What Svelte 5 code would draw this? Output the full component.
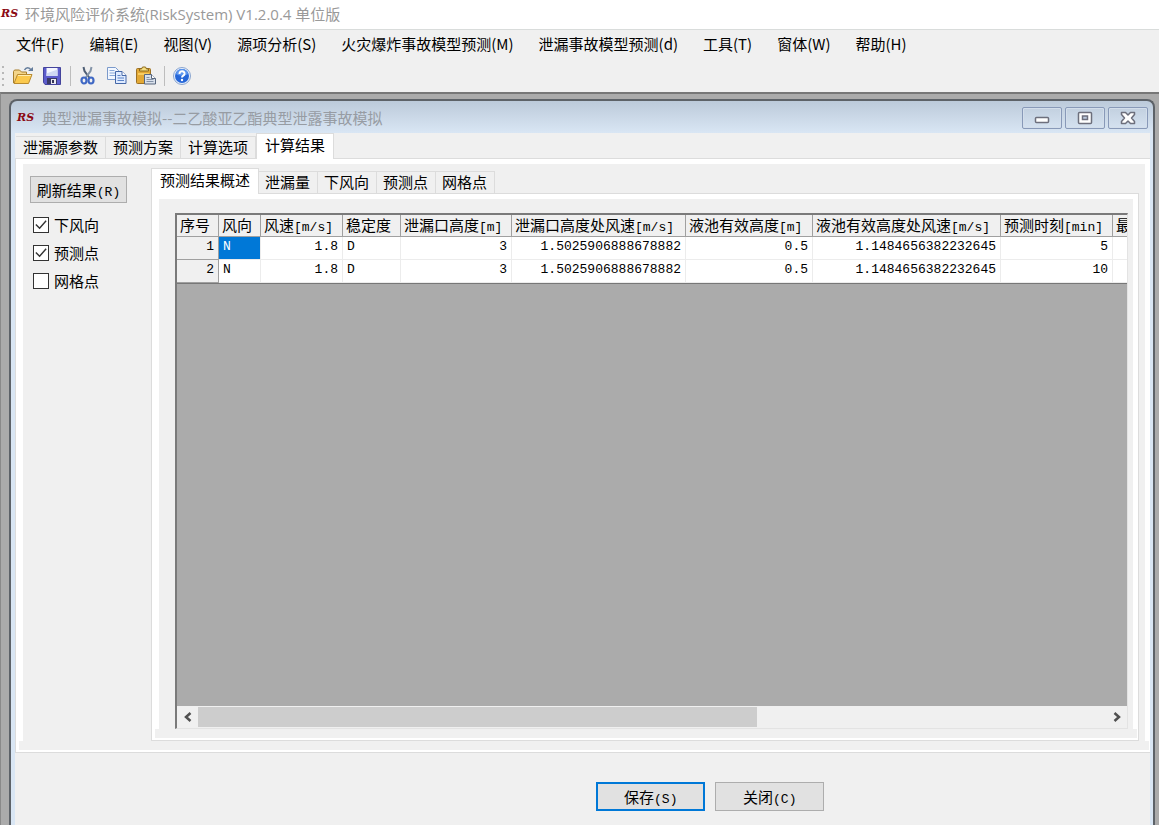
<script>
    const menus = [
        "文件(F)",
        "编辑(E)",
        "视图(V)",
        "源项分析(S)",
        "火灾爆炸事故模型预测(M)",
        "泄漏事故模型预测(d)",
        "工具(T)",
        "窗体(W)",
        "帮助(H)",
    ];

    const tabs = ["泄漏源参数", "预测方案", "计算选项", "计算结果"];
    const resultTabs = ["预测结果概述", "泄漏量", "下风向", "预测点", "网格点"];

    const columns = [
        { name: "序号", unit: "", width: 42 },
        { name: "风向", unit: "", width: 42 },
        { name: "风速", unit: "[m/s]", width: 82, num: true },
        { name: "稳定度", unit: "", width: 58 },
        { name: "泄漏口高度", unit: "[m]", width: 111, num: true },
        { name: "泄漏口高度处风速", unit: "[m/s]", width: 174, num: true },
        { name: "液池有效高度", unit: "[m]", width: 127, num: true },
        { name: "液池有效高度处风速", unit: "[m/s]", width: 188, num: true },
        { name: "预测时刻", unit: "[min]", width: 112, num: true },
        { name: "最", unit: "", width: 120, num: true },
    ];

    const rows = [
        ["1", "N", "1.8", "D", "3", "1.5025906888678882", "0.5", "1.1484656382232645", "5", ""],
        ["2", "N", "1.8", "D", "3", "1.5025906888678882", "0.5", "1.1484656382232645", "10", ""],
    ];

    let activeTab = $state(3);
    let activeResult = $state(0);
    let selected = $state("0-1");
    let options = $state([
        { label: "下风向", checked: true },
        { label: "预测点", checked: true },
        { label: "网格点", checked: false },
    ]);
</script>

<div class="app">
    <header class="titlebar">
        <span class="logo">RS</span>
        <h1>环境风险评价系统(RiskSystem) V1.2.0.4 单位版</h1>
    </header>

    <nav class="menubar">
        {#each menus as menu}
            <button type="button">{menu}</button>
        {/each}
    </nav>

    <div class="toolbar" role="toolbar" aria-label="工具栏">
        <span class="grip"></span>
        <button type="button" class="tool" aria-label="打开">
            <svg width="22" height="20" viewBox="0 0 22 20">
                <path d="M1.500 17V5.500l1-1.500h5l2 2h5v3" fill="#f3d58a" stroke="#a87f2c" />
                <path d="M2 17.500L5.500 8.500h14.500l-3.500 9z" fill="#fbc94d" stroke="#b98a2e" />
                <path d="M6 9.500h13" stroke="#ffedb0" />
                <path d="M12.500 4c1.500-3 5-3 6.500 0" fill="none" stroke="#657d9c" stroke-width="1.500" />
                <path d="M16 5h5V1z" fill="#657d9c" />
            </svg>
        </button>
        <button type="button" class="tool" aria-label="保存">
            <svg width="20" height="20" viewBox="0 0 20 20">
                <path d="M1.500 1.500h17v17H3l-1.500-2z" fill="#5c5ccc" stroke="#44449c" />
                <path d="M4.500 2h11v8h-11z" fill="#f4f6ff" />
                <path d="M4.500 7.500l11-4v6.500h-11z" fill="#cfd8f4" />
                <path d="M5 12h10v6H5z" fill="#3a3a66" />
                <path d="M9 13h5v5H9z" fill="#e8e8f0" />
                <path d="M10 14h2v3h-2z" fill="#333355" />
            </svg>
        </button>
        <span class="sep"></span>
        <button type="button" class="tool" aria-label="剪切">
            <svg width="18" height="20" viewBox="0 0 18 20">
                <path d="M4.500 1l1 4 5 7" fill="none" stroke="#4f5f75" stroke-width="2" />
                <path d="M12.500 1l-1 4-5 7" fill="none" stroke="#8494a8" stroke-width="2" />
                <ellipse cx="5" cy="14.500" rx="2.500" ry="3" fill="none" stroke="#3f68c4" stroke-width="2.200" />
                <ellipse cx="12" cy="14.500" rx="2.500" ry="3" fill="none" stroke="#3f68c4" stroke-width="2.200" />
            </svg>
        </button>
        <button type="button" class="tool" aria-label="复制">
            <svg width="20" height="20" viewBox="0 0 20 20">
                <path d="M.5 1.500h8l3 3v9H.5z" fill="#f2f7ff" stroke="#7b9acb" />
                <path d="M2.500 4.500h5M2.500 7h7M2.500 9.500h7" stroke="#87a7d8" />
                <path d="M8.500 5.500h6.500l4 4v8H8.500z" fill="#dfebff" stroke="#4467a7" />
                <path d="M15 5.500v4h4" fill="#fff" stroke="#4467a7" />
                <path d="M10.500 9.500h3M10.500 12h6.500M10.500 14.500h6.500" stroke="#5b83c6" />
            </svg>
        </button>
        <button type="button" class="tool" aria-label="粘贴">
            <svg width="22" height="20" viewBox="0 0 22 20">
                <rect x="1.500" y="2.500" width="14" height="15" rx="1" fill="#e3a936" stroke="#9c7125" />
                <path d="M4.500 5V3h2l1-2h3l1 2h2v2z" fill="#f6df83" stroke="#8c6a1d" />
                <path d="M3 7h11v2H3z" fill="#f8cd62" />
                <path d="M9.500 8.500h7l4 4v5.500h-11z" fill="#d9e1ec" stroke="#58677f" />
                <path d="M16.500 8.500v4h4" fill="#fff" stroke="#58677f" />
                <path d="M11.500 11.500h3M11.500 13.500h7M11.500 15.500h7" stroke="#8492a8" />
            </svg>
        </button>
        <span class="sep"></span>
        <button type="button" class="tool" aria-label="帮助">
            <svg width="20" height="20" viewBox="0 0 20 20">
                <circle cx="10" cy="10" r="8.500" fill="#e6effc" stroke="#8aa5cf" />
                <circle cx="10" cy="10" r="7" fill="#2566d8" />
                <path d="M4 8a6 5 0 0 1 12 0c-3 2-9 2-12 0z" fill="#5b95ee" />
                <path d="M7.500 8c0-4 5.500-3.500 5 0-.3 1.800-2.500 1.500-2.500 3.500" fill="none" stroke="#fff" stroke-width="2" />
                <circle cx="10" cy="14" r="1.200" fill="#fff" />
            </svg>
        </button>
    </div>

    <main class="workspace">
        <section class="window">
            <div class="window-title">
                <span class="logo">RS</span>
                <h2>典型泄漏事故模拟--二乙酸亚乙酯典型泄露事故模拟</h2>
                <div class="window-buttons">
                    <button type="button" aria-label="最小化">
                        <svg width="16" height="14" viewBox="0 0 16 14">
                            <rect x="1.500" y="6.500" width="13" height="5" rx="1" fill="#fff" stroke="#6d6f7c" stroke-width="1.500" />
                        </svg>
                    </button>
                    <button type="button" aria-label="最大化">
                        <svg width="16" height="14" viewBox="0 0 16 14">
                            <rect x="1.500" y="1.500" width="13" height="11" rx="1" fill="#fff" stroke="#6d6f7c" stroke-width="1.500" />
                            <rect x="5.500" y="5" width="5" height="3.500" fill="#b9c8dc" stroke="#6d6f7c" stroke-width="1.500" />
                        </svg>
                    </button>
                    <button type="button" aria-label="关闭窗口">
                        <svg width="16" height="14" viewBox="0 0 16 14">
                            <path d="M1.500 1.500h4L8 4l2.500-2.500h4v2L11.500 7l3 3.500v2h-4L8 10l-2.500 2.500h-4v-2L4.500 7l-3-3.500z" fill="#fff" stroke="#6d6f7c" stroke-width="1.500" stroke-linejoin="round" />
                        </svg>
                    </button>
                </div>
            </div>

            <div class="content">
                <div class="tabs outer-tabs" role="tablist">
                    {#each tabs as tab, i}
                        <button
                            type="button"
                            role="tab"
                            aria-selected={activeTab === i}
                            class:active={activeTab === i}
                            onclick={() => (activeTab = i)}>{tab}</button
                        >
                    {/each}
                </div>

                <div class="page outer-page">
                    <div class="page-body">
                        <aside class="side">
                            <button type="button" class="btn refresh"
                                >刷新结果<span class="mono">(R)</span></button
                            >
                            {#each options as option}
                                <label>
                                    <input type="checkbox" bind:checked={option.checked} />
                                    {option.label}
                                </label>
                            {/each}
                        </aside>

                        <div class="results">
                            <div class="tabs" role="tablist">
                                {#each resultTabs as tab, i}
                                    <button
                                        type="button"
                                        role="tab"
                                        aria-selected={activeResult === i}
                                        class:active={activeResult === i}
                                        onclick={() => (activeResult = i)}>{tab}</button
                                    >
                                {/each}
                            </div>
                            <div class="page">
                                <div class="page-body grid-holder">
                                    <div class="grid">
                                        <div class="grid-view">
                                            <table>
                                                <colgroup>
                                                    {#each columns as col}
                                                        <col style="width: {col.width}px" />
                                                    {/each}
                                                </colgroup>
                                                <thead>
                                                    <tr>
                                                        {#each columns as col}
                                                            <th scope="col"
                                                                >{col.name}<span class="mono">{col.unit}</span></th
                                                            >
                                                        {/each}
                                                    </tr>
                                                </thead>
                                                <tbody>
                                                    {#each rows as row, r}
                                                        <tr>
                                                            {#each row as cell, c}
                                                                {#if c === 0}
                                                                    <th scope="row">{cell}</th>
                                                                {:else}
                                                                    <td
                                                                        class:num={columns[c].num}
                                                                        class:selected={selected === `${r}-${c}`}
                                                                        onclick={() => (selected = `${r}-${c}`)}
                                                                        >{cell}</td
                                                                    >
                                                                {/if}
                                                            {/each}
                                                        </tr>
                                                    {/each}
                                                </tbody>
                                            </table>
                                        </div>
                                        <div class="scrollbar">
                                            <button type="button" aria-label="向左滚动">
                                                <svg width="8" height="10" viewBox="0 0 8 10">
                                                    <path d="M6.500 1L2 5l4.500 4" />
                                                </svg>
                                            </button>
                                            <div class="track"><div class="thumb"></div></div>
                                            <button type="button" aria-label="向右滚动">
                                                <svg width="8" height="10" viewBox="0 0 8 10">
                                                    <path d="M1.500 1L6 5L1.500 9" />
                                                </svg>
                                            </button>
                                        </div>
                                    </div>
                                </div>
                            </div>
                        </div>
                    </div>
                </div>

                <footer class="actions">
                    <button type="button" class="btn primary">保存<span class="mono">(S)</span></button>
                    <button type="button" class="btn">关闭<span class="mono">(C)</span></button>
                </footer>
            </div>
        </section>
    </main>
</div>

<style>
    :global(body) {
        overflow: hidden;
    }

    .app {
        display: flex;
        flex-direction: column;
        height: 100vh;
        background: #f0f0f0;
        color: #000;
        font-family: "Noto Sans CJK SC", sans-serif;
        font-size: 15px;
        line-height: 20px;
    }

    .app * {
        box-sizing: border-box;
    }

    button {
        margin: 0;
        padding: 0;
        border: 0;
        background: none;
        color: inherit;
        font: inherit;
        white-space: nowrap;
    }

    h1,
    h2 {
        margin: 0;
        font-size: 15px;
        font-weight: 400;
        white-space: nowrap;
    }

    svg {
        display: block;
    }

    .mono {
        font-family: "Liberation Mono", monospace;
        font-size: 13px;
        line-height: 13px;
    }

    .logo {
        width: 18px;
        color: #8b0a14;
        font: italic bold 11px/14px "DejaVu Serif", serif;
    }

    .titlebar {
        display: flex;
        align-items: center;
        gap: 6px;
        height: 30px;
        padding: 0 0 2px 1px;
        border-bottom: 1px solid #d9dcdb;
        background: #fff;
        color: #999;
    }

    h1 {
        font-family: "Open Sans", "Noto Sans CJK SC", sans-serif;
    }

    .menubar {
        display: flex;
        gap: 1px;
        height: 30px;
        padding-left: 4px;
    }

    .menubar button {
        padding: 0 12px 2px;
    }

    .toolbar {
        display: flex;
        align-items: center;
        height: 32px;
        padding-left: 2px;
    }

    .grip {
        width: 2px;
        height: 20px;
        margin-right: 8px;
        background: repeating-linear-gradient(#b8b8b8 0 2px, transparent 2px 6px);
    }

    .tool {
        display: flex;
        justify-content: center;
        width: 22px;
        margin-right: 7px;
    }

    .sep {
        width: 1px;
        height: 20px;
        margin-right: 6px;
        background: #bdbdbd;
    }

    .workspace {
        display: flex;
        flex: 1;
        min-height: 0;
        padding: 5px 4px 0 8px;
        border-top: 2px solid #777;
        border-left: 1px solid #8a8a8a;
        background: #ababab;
    }

    .window {
        display: flex;
        flex: 1;
        flex-direction: column;
        min-width: 0;
        padding: 0 3px 0 4px;
        border: 2px solid #5d6268;
        border-bottom: 0;
        border-radius: 8px 8px 0 0;
        background: linear-gradient(#bccada, #d9e6f4 32px);
    }

    .window-title {
        display: flex;
        align-items: center;
        gap: 7px;
        height: 32px;
        padding: 2px 2px 0 2px;
        color: #979ca3;
    }

    .window-buttons {
        display: flex;
        gap: 3px;
        margin-left: auto;
    }

    .window-buttons button {
        display: flex;
        align-items: center;
        justify-content: center;
        width: 40px;
        height: 22px;
        border: 1px solid #8899b8;
        border-radius: 2px;
        box-shadow: inset 0 0 0 1px #d3deeb;
    }

    .content {
        display: flex;
        flex: 1;
        flex-direction: column;
        min-height: 0;
        background: #f0f0f0;
    }

    .tabs {
        display: flex;
        align-items: flex-end;
        height: 25px;
    }

    .tabs button {
        height: 22px;
        padding: 0 7px 1px 6px;
        border: 1px solid #dcdcdc;
        border-left: 0;
        border-bottom: 0;
    }

    .outer-tabs button {
        padding-left: 7px;
    }

    .tabs .active {
        position: relative;
        height: 26px;
        margin-bottom: -1px;
        padding: 0 8px 4px;
        border-left: 1px solid #dcdcdc;
        background: #fff;
    }

    .outer-tabs {
        padding-left: 1px;
    }

    .page {
        display: flex;
        flex: 1;
        flex-direction: column;
        min-height: 0;
        padding: 5px 1px 11px 3px;
        border: 1px solid #dcdcdc;
        background:
            linear-gradient(#f0f0f0, #f0f0f0) 3px calc(100% - 2px) / calc(100% - 4px) 9px no-repeat,
            #fff;
    }

    .outer-page {
        border-right: 0;
    }

    .page-body {
        display: flex;
        flex: 1;
        min-height: 0;
        margin: 0 4px 0 4px;
        background: #f0f0f0;
    }

    .side {
        display: flex;
        flex-direction: column;
        flex-shrink: 0;
        width: 128px;
        padding: 12px 7px;
    }

    .side label {
        display: flex;
        align-items: center;
        gap: 5px;
        height: 28px;
        padding-left: 3px;
    }

    .side input {
        width: 16px;
        height: 16px;
        margin: 0;
        border: 1px solid #333;
        appearance: none;
        background: #fff;
    }

    .side input:checked {
        background: #fff
            url("data:image/svg+xml,%3Csvg xmlns='http://www.w3.org/2000/svg' viewBox='0 0 15 15'%3E%3Cpath d='M2 7l4 4 7-8' fill='none' stroke='%23333' stroke-width='1.500'/%3E%3C/svg%3E");
    }

    .btn {
        width: 109px;
        height: 29px;
        border: 1px solid #adadad;
        background: #e1e1e1;
    }

    .btn.refresh {
        width: 97px;
        height: 27px;
        margin-bottom: 8px;
    }

    .btn.primary {
        border: 2px solid #0078d7;
    }

    .results {
        display: flex;
        flex: 1;
        flex-direction: column;
        min-width: 0;
        margin: 4px 6px 0 0;
    }

    .grid-holder {
        padding: 14px 5px 0 16px;
    }

    .grid {
        display: flex;
        flex: 1;
        flex-direction: column;
        min-width: 0;
        border: 2px solid #7a7a7a;
        border-right: 1px solid #e3e3e3;
        border-bottom: 1px solid #e3e3e3;
        background: #ababab;
    }

    .grid-view {
        flex: 1;
        min-height: 0;
        overflow: hidden;
    }

    table {
        width: 0;
        border-bottom: 1px solid #777;
        border-collapse: separate;
        border-spacing: 0;
        table-layout: fixed;
        background: #fff;
    }

    th,
    td {
        height: 23px;
        padding: 0 4px 2px;
        border-right: 1px solid #ececec;
        border-bottom: 1px solid #ececec;
        line-height: 18px;
        text-align: left;
        white-space: nowrap;
    }

    th {
        border-color: #a0a0a0;
        background: #f0f0f0;
        font-weight: 400;
    }

    thead th {
        height: 22px;
        padding: 0 3px 1px;
    }

    td,
    tbody th {
        font-family: "Liberation Mono", monospace;
        font-size: 13px;
    }

    tbody th,
    .num {
        text-align: right;
    }

    thead th {
        text-align: left;
    }

    .selected {
        background: #0078d7;
        color: #fff;
    }

    .scrollbar {
        display: flex;
        height: 22px;
        padding: 1px 0;
        background: #f0f0f0;
    }

    .scrollbar button {
        display: flex;
        align-items: center;
        justify-content: center;
        width: 21px;
    }

    .scrollbar path {
        fill: none;
        stroke: #505050;
        stroke-width: 2.5;
    }

    .track {
        flex: 1;
    }

    .thumb {
        width: 61.6%;
        height: 100%;
        background: #cdcdcd;
    }

    .actions {
        display: flex;
        flex-shrink: 0;
        justify-content: flex-end;
        gap: 10px;
        height: 72px;
        padding: 29px 28.7% 0 0;
    }
</style>
